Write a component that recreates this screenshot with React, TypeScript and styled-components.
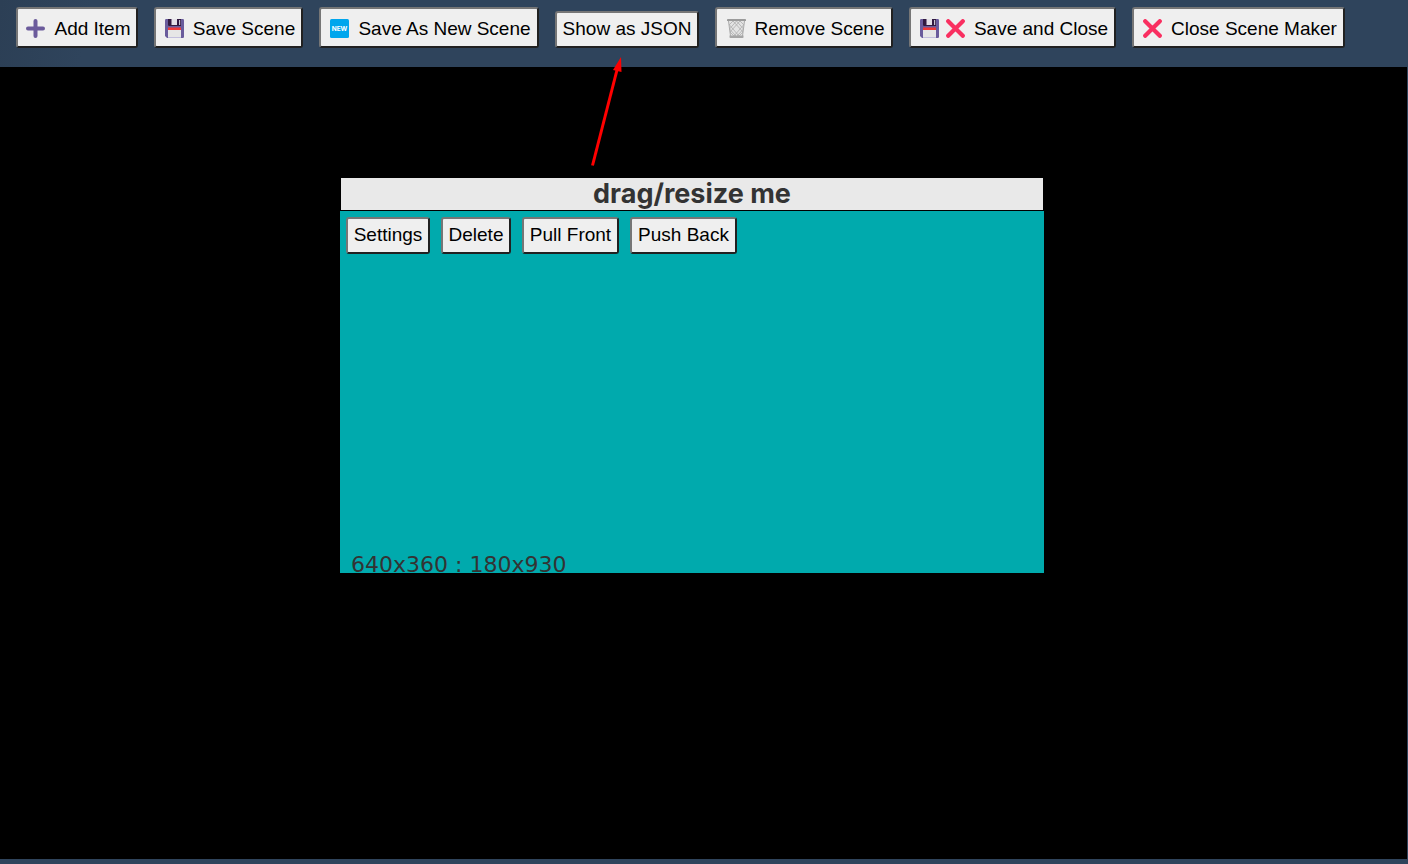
import React from 'react';
import styled, { createGlobalStyle } from 'styled-components';

const GlobalStyle = createGlobalStyle`
  * { box-sizing: border-box; }
  body { margin: 0; background: #2f445c; }
`;

const Page = styled.div`
  display: flex;
  flex-direction: column;
  min-height: 100vh;
  padding: 0 1px 5px 0;
  background: linear-gradient(100deg, #2c3f55 0, #2f445c 90px);
  font-family: 'Liberation Sans', Arial, sans-serif;
`;

const Toolbar = styled.header`
  display: flex;
  align-items: flex-end;
  gap: 16px;
  padding: 7px 16px 19px;
`;

const Button = styled.button<{ $tall?: boolean; $width: number }>`
  display: flex;
  align-items: center;
  justify-content: center;
  flex: none;
  min-width: ${({ $width }) => $width}px;
  height: ${({ $tall }) => ($tall ? 41 : 37)}px;
  padding: ${({ $tall }) => ($tall ? '1px 5px 0' : '0 5px 2px')};
  border: 2px solid;
  border-color: #767676 #212121 #212121 #767676;
  border-radius: 3px;
  background: #efefef;
  color: #000;
  font: 19px/22px 'Liberation Sans', Arial, sans-serif;
  white-space: nowrap;
`;

const Label = styled.span<{ $spaced?: boolean }>`
  margin-left: ${({ $spaced }) => ($spaced ? 5 : 0)}px;
  padding-top: ${({ $spaced }) => ($spaced ? 1 : 0)}px;
`;

const Icon = styled.svg`
  flex: none;
  width: 19px;
  height: 19px;
  margin: 0 4px 0 3px;
`;

const Canvas = styled.main`
  position: relative;
  flex: 1;
  min-height: 520px;
  overflow: hidden;
  background: #000;
`;

const SceneItem = styled.section`
  position: absolute;
  left: 340px;
  top: 110px;
  display: flex;
  flex-direction: column;
  width: 704px;
  height: 396px;
  background: #00aaad;
  color: #333;
`;

const ItemTitle = styled.h2`
  margin: 0;
  height: 34px;
  border: 1px solid #000;
  background: #e9e9e9;
  font: 700 27px/32px Inter, sans-serif;
  text-align: center;
`;

const ItemActions = styled.div`
  display: flex;
  gap: 11px;
  padding: 6px;
`;

const ItemSize = styled.p`
  margin: auto 0 0 11px;
  font: 22px/16px 'DejaVu Sans', sans-serif;
`;

const Arrow = styled.svg`
  position: absolute;
  left: 580px;
  top: 50px;
  width: 50px;
  height: 120px;
  pointer-events: none;
`;

const PlusIcon = () => (
  <Icon viewBox="0 0 19 19" aria-hidden="true">
    <path d="M9.5 2v15M2 9.5h15" stroke="#6b5b9b" strokeWidth="4" strokeLinecap="round" />
  </Icon>
);

const FloppyIcon = () => (
  <Icon viewBox="0 0 19 19" aria-hidden="true">
    <path d="M1.2 0h16.6Q19 0 19 1.2v16.6q0 1.2-1.2 1.2H2L0 17V1.2Q0 0 1.2 0z" fill="#6a5c9c" />
    <path d="M3 0h13v7H4.2q-1.2 0-1.2-1.2z" fill="#321b41" />
    <path d="M6.5 0H12v6H6.5z" fill="#e4e1e8" />
    <path d="M12 1h2v5h-2z" fill="#321b41" />
    <path d="M14 1h1.2v5H14z" fill="#c9c3d2" />
    <path d="M3 9h13v10H3z" fill="#e6e6e6" />
    <path d="M3 8.5h13V11H3z" fill="#f03a38" />
    <path d="M3 18h13v1H3z" fill="#c3bfdd" />
  </Icon>
);

const NewIcon = () => (
  <Icon viewBox="0 0 19 19" aria-hidden="true">
    <rect width="19" height="19" rx="1.5" fill="#00a6ed" />
    <text x="9.5" y="12" fill="#fff" fontFamily="Inter, sans-serif" fontSize="6.5" fontWeight="700" textAnchor="middle">
      NEW
    </text>
  </Icon>
);

const BinIcon = () => (
  <Icon viewBox="0 0 19 19" aria-hidden="true">
    <path d="M1.5 2h16l-2 15h-12z" fill="#e4e4e4" />
    <path
      d="M2 6l4-4 10 11-4 4L2.5 6M17 6l-4-4L3 13l4 4L16.5 6M9.5 2l7 8-6.5 7M9.5 2l-7 8 6.5 7"
      fill="none"
      stroke="#b2b2b2"
      strokeWidth="0.9"
    />
    <path d="M1.5 2l2 15M17.5 2l-2 15" stroke="#aaa" strokeWidth="1" />
    <path d="M.7 0h17.6q.7 0 .7.7V2H0V.7Q0 0 .7 0z" fill="#9b9b9b" />
    <path d="M2.5 16.5h14v1.7q0 .8-.8.8H3.3q-.8 0-.8-.8z" fill="#a5a5a5" />
  </Icon>
);

const CrossIcon = () => (
  <Icon viewBox="0 0 19 19" aria-hidden="true">
    <path d="M2.2 2.2l14.6 14.6M16.8 2.2L2.2 16.8" stroke="#f92f60" strokeWidth="4.2" strokeLinecap="round" />
  </Icon>
);

const sceneActions: { label: string; width: number; icons: React.FC[] }[] = [
  { label: 'Add Item', width: 122, icons: [PlusIcon] },
  { label: 'Save Scene', width: 149, icons: [FloppyIcon] },
  { label: 'Save As New Scene', width: 220, icons: [NewIcon] },
  { label: 'Show as JSON', width: 144, icons: [] },
  { label: 'Remove Scene', width: 178, icons: [BinIcon] },
  { label: 'Save and Close', width: 207, icons: [FloppyIcon, CrossIcon] },
  { label: 'Close Scene Maker', width: 213, icons: [CrossIcon] },
];

const itemActions = [
  { label: 'Settings', width: 84 },
  { label: 'Delete', width: 70 },
  { label: 'Pull Front', width: 97 },
  { label: 'Push Back', width: 107 },
];

export default function App() {
  return (
    <>
      <GlobalStyle />
      <Page>
        <Toolbar>
          {sceneActions.map(({ label, width, icons }) => (
            <Button key={label} type="button" $tall={icons.length > 0} $width={width}>
              {icons.map((Glyph, i) => (
                <Glyph key={i} />
              ))}
              <Label $spaced={icons.length > 0}>{label}</Label>
            </Button>
          ))}
        </Toolbar>
        <Canvas>
          <SceneItem>
            <ItemTitle>drag/resize me</ItemTitle>
            <ItemActions>
              {itemActions.map(({ label, width }) => (
                <Button key={label} type="button" $width={width}>
                  {label}
                </Button>
              ))}
            </ItemActions>
            <ItemSize>640x360 : 180x930</ItemSize>
          </SceneItem>
        </Canvas>
        <Arrow viewBox="0 0 50 120" aria-hidden="true">
          <path d="M12.5 115.5L37 20" stroke="#f00" strokeWidth="3" />
          <path d="M41 7l.5 15-8.5-2z" fill="#f00" />
        </Arrow>
      </Page>
    </>
  );
}
